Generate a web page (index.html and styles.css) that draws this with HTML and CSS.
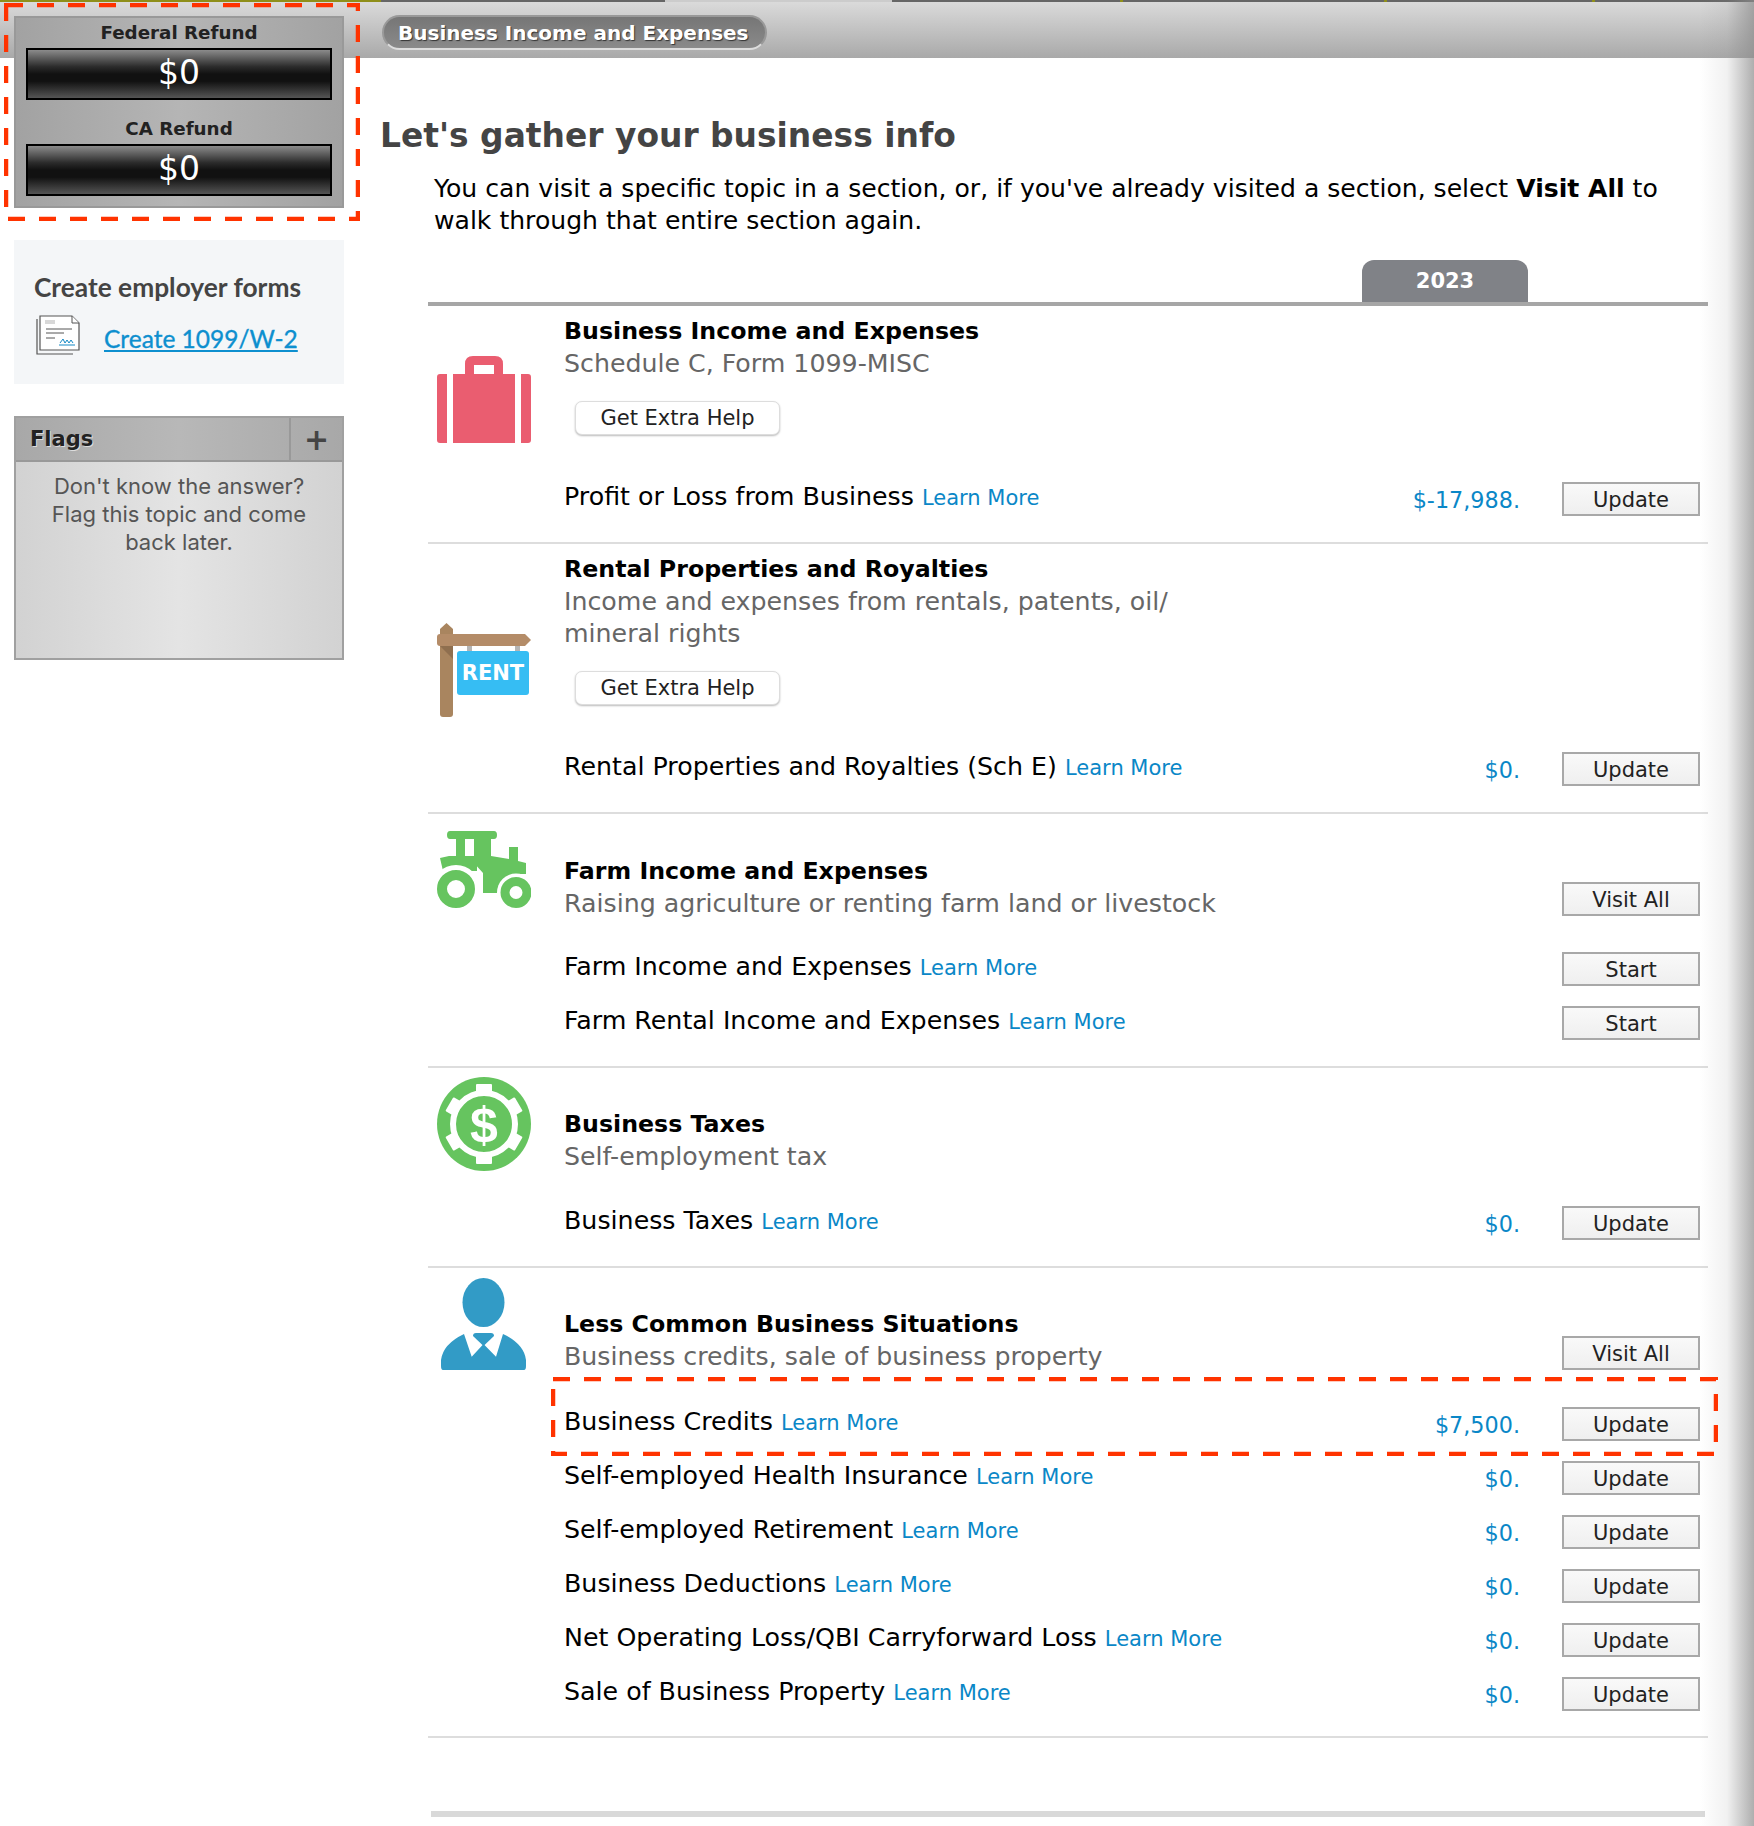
FILE: index.html
```html
<!DOCTYPE html>
<html lang="en">
<head>
<meta charset="utf-8">
<title>Business Income and Expenses</title>
<link rel="stylesheet" href="styles.css">
</head>
<body>
<div class="page">
  <aside class="side">
    <div class="refunds">
      <div class="refund-label">Federal Refund</div>
      <div class="refund-value">$0</div>
      <div class="refund-label second">CA Refund</div>
      <div class="refund-value">$0</div>
    </div>
    <div class="employer">
      <h3 class="employer-title">Create employer forms</h3>
      <div class="employer-link">
        <svg class="doc-icon" viewBox="0 0 44 40" aria-hidden="true">
          <path d="M1 4V39H37" fill="none" stroke="#555" stroke-width="1.200"/>
          <path d="M4 1H36L43 8V35H4Z" fill="#fff" stroke="#555" stroke-width="1.200"/>
          <path d="M36 1V8H43" fill="#fff" stroke="#555" stroke-width="1"/>
          <rect x="9" y="5" width="10" height="4" fill="#d8d8d8"/>
          <path d="M10 14H36M10 18H28M10 23H19" stroke="#555" stroke-width="1"/>
          <path d="M24 28L27 24L29 28L31 25L33 28L35 25L37 28M23 30H39" fill="none" stroke="#1589c5" stroke-width="1"/>
        </svg>
        <a class="link" href="#">Create 1099/W-2</a>
      </div>
    </div>
    <div class="flags">
      <div class="flags-head">
        <span class="flags-title">Flags</span>
        <span class="flags-plus">+</span>
      </div>
      <p class="flags-body">Don't know the answer? Flag this topic and come back later.</p>
    </div>
  </aside>

  <main class="main">
    <div class="crumb-bar"><span class="crumb">Business Income and Expenses</span></div>
    <h1 class="heading">Let's gather your business info</h1>
    <p class="intro">You can visit a specific topic in a section, or, if you've already visited a section, select <b>Visit All</b> to walk through that entire section again.</p>
    <div class="table">
      <div class="tab-line"><span class="tab">2023</span></div>

      <section class="section s1">
        <svg class="icon icon-case" viewBox="0 0 94 87" aria-hidden="true">
          <path fill-rule="evenodd" fill="#ea5d70" d="M36 0H58Q66 0 66 8V18H78V87H16V18H28V8Q28 0 36 0ZM37 9V18H57V9Z"/>
          <path fill="#ea5d70" d="M3 18H10V87H3Q0 87 0 84V21Q0 18 3 18ZM84 18H91Q94 18 94 21V84Q94 87 91 87H84Z"/>
        </svg>
        <div class="content">
          <div class="head"><div>
            <h2 class="title">Business Income and Expenses</h2>
            <p class="sub">Schedule C, Form 1099-MISC</p>
          </div></div>
          <button class="help">Get Extra Help</button>
          <div class="rows gap-help">
            <div class="row"><span class="name">Profit or Loss from Business <a class="more" href="#">Learn More</a></span><span class="value">$-17,988.</span><button class="btn">Update</button></div>
          </div>
        </div>
      </section>

      <section class="section s2">
        <svg class="icon icon-rent" viewBox="0 0 94 94" aria-hidden="true">
          <rect x="30" y="22" width="5" height="7" fill="#b5b5b5"/>
          <rect x="78" y="22" width="5" height="7" fill="#b5b5b5"/>
          <path fill="#a9855f" d="M3 6L9.500 0L16 6V91Q16 94 13 94H6Q3 94 3 91Z"/>
          <path fill="#8f6f4f" d="M3 23H16V36Z"/>
          <path fill="#b48c68" d="M3 11H88L94 17L88 23H3Q0 23 0 20V14Q0 11 3 11Z"/>
          <rect x="20" y="28" width="72" height="44" rx="3" fill="#36bdf3"/>
          <text class="rent-text" x="56" y="57" text-anchor="middle">RENT</text>
        </svg>
        <div class="content">
          <div class="head"><div>
            <h2 class="title">Rental Properties and Royalties</h2>
            <p class="sub narrow">Income and expenses from rentals, patents, oil/ mineral rights</p>
          </div></div>
          <button class="help">Get Extra Help</button>
          <div class="rows gap-help">
            <div class="row"><span class="name">Rental Properties and Royalties (Sch E) <a class="more" href="#">Learn More</a></span><span class="value">$0.</span><button class="btn">Update</button></div>
          </div>
        </div>
      </section>

      <section class="section s3">
        <svg class="icon icon-tractor" viewBox="0 0 94 77" aria-hidden="true">
          <path fill="#66c45f" fill-rule="evenodd" d="M13 0H57Q60 0 60 4T57 8H54V25L72 28V16H81V30L89 32V43H84L60 62H46V42L37 32V8H28V25H19V8H13Q10 8 10 4T13 0Z"/>
          <path fill="#66c45f" d="M3 27L12 25H40V40H6Z"/>
          <circle cx="19" cy="58" r="24" fill="#fff"/>
          <circle cx="79" cy="61.500" r="19" fill="#fff"/>
          <circle cx="19" cy="58" r="14" fill="none" stroke="#66c45f" stroke-width="10"/>
          <circle cx="79" cy="61.500" r="11" fill="none" stroke="#66c45f" stroke-width="9"/>
        </svg>
        <div class="content">
          <div class="head"><div>
            <h2 class="title">Farm Income and Expenses</h2>
            <p class="sub">Raising agriculture or renting farm land or livestock</p>
          </div><button class="btn visit">Visit All</button></div>
          <div class="rows gap-rows">
            <div class="row"><span class="name">Farm Income and Expenses <a class="more" href="#">Learn More</a></span><button class="btn">Start</button></div>
            <div class="row"><span class="name">Farm Rental Income and Expenses <a class="more" href="#">Learn More</a></span><button class="btn">Start</button></div>
          </div>
        </div>
      </section>

      <section class="section s4">
        <svg class="icon icon-money" viewBox="0 0 94 94" aria-hidden="true">
          <circle cx="47" cy="47" r="47" fill="#66c45f"/>
          <circle cx="47" cy="47" r="31" fill="none" stroke="#fff" stroke-width="6"/>
          <g fill="#fff">
            <rect x="39" y="7" width="16" height="11" rx="1"/>
            <rect x="39" y="7" width="16" height="11" rx="1" transform="rotate(60 47 47)"/>
            <rect x="39" y="7" width="16" height="11" rx="1" transform="rotate(120 47 47)"/>
            <rect x="39" y="7" width="16" height="11" rx="1" transform="rotate(180 47 47)"/>
            <rect x="39" y="7" width="16" height="11" rx="1" transform="rotate(240 47 47)"/>
            <rect x="39" y="7" width="16" height="11" rx="1" transform="rotate(300 47 47)"/>
          </g>
          <text class="money-text" x="47" y="65" text-anchor="middle">$</text>
        </svg>
        <div class="content">
          <div class="head"><div>
            <h2 class="title">Business Taxes</h2>
            <p class="sub">Self-employment tax</p>
          </div></div>
          <div class="rows gap-rows">
            <div class="row"><span class="name">Business Taxes <a class="more" href="#">Learn More</a></span><span class="value">$0.</span><button class="btn">Update</button></div>
          </div>
        </div>
      </section>

      <section class="section s5">
        <svg class="icon icon-person" viewBox="0 0 85 92" aria-hidden="true">
          <ellipse cx="42.500" cy="24.500" rx="21" ry="24.500" fill="#329bc6"/>
          <path fill="#329bc6" d="M2 92Q0 92 0 88V82Q2 66 23 56L30.700 78.700L42.500 66L55 78.700L62 56Q83 66 85 82V88Q85 92 83 92Z"/>
          <path fill="#329bc6" d="M35 55H50Q53 55 53 58L42.500 68L32 58Q32 55 35 55Z"/>
        </svg>
        <div class="content">
          <div class="head"><div>
            <h2 class="title">Less Common Business Situations</h2>
            <p class="sub">Business credits, sale of business property</p>
          </div><button class="btn visit">Visit All</button></div>
          <div class="rows gap-rows">
            <div class="row"><span class="name">Business Credits <a class="more" href="#">Learn More</a></span><span class="value">$7,500.</span><button class="btn">Update</button></div>
            <div class="row"><span class="name">Self-employed Health Insurance <a class="more" href="#">Learn More</a></span><span class="value">$0.</span><button class="btn">Update</button></div>
            <div class="row"><span class="name">Self-employed Retirement <a class="more" href="#">Learn More</a></span><span class="value">$0.</span><button class="btn">Update</button></div>
            <div class="row"><span class="name">Business Deductions <a class="more" href="#">Learn More</a></span><span class="value">$0.</span><button class="btn">Update</button></div>
            <div class="row"><span class="name">Net Operating Loss/QBI Carryforward Loss <a class="more" href="#">Learn More</a></span><span class="value">$0.</span><button class="btn">Update</button></div>
            <div class="row"><span class="name">Sale of Business Property <a class="more" href="#">Learn More</a></span><span class="value">$0.</span><button class="btn">Update</button></div>
          </div>
        </div>
      </section>
      <div class="end-bar"></div>
    </div>
  </main>

  <div class="edge-shadow"></div>
  <svg class="mark mark-a" viewBox="0 0 356 218" aria-hidden="true"><rect x="2" y="2" width="352" height="214" fill="none" stroke="#ff3300" stroke-width="4.500" stroke-dasharray="17 14"/></svg>
  <svg class="mark mark-b" viewBox="0 0 1167 79" aria-hidden="true"><rect x="2" y="2" width="1163" height="75" fill="none" stroke="#ff3300" stroke-width="4.500" stroke-dasharray="17 14"/></svg>
</div>
</body>
</html>
```
FILE: styles.css
```css
* { box-sizing: border-box; }
html, body { margin: 0; padding: 0; background: #fff; }
body { font-family: "DejaVu Sans", sans-serif; color: #000; }
p, h1, h2, h3 { margin: 0; }
button { font-family: inherit; cursor: pointer; padding: 0; }

.page {
  position: relative;
  display: flex;
  width: 1754px;
  height: 1826px;
  overflow: hidden;
  background:
    linear-gradient(90deg, #8f8f1a 0 381px, #666 381px 665px, #ccc 665px 892px, #666 892px 1120px, #8f8f1a 1120px 1123px, #666 1123px 1384px, #8f8f1a 1384px 1387px, #666 1387px 1592px, #8f8f1a 1592px 1595px, #666 1595px) 0 0 / 100% 2px no-repeat,
    linear-gradient(#dcdcdc, #a9a9a9) 0 0 / 100% 58px no-repeat,
    #fff;
}

/* sidebar */
.side { flex: 0 0 380px; padding: 16px 0 0 14px; }
.refunds {
  width: 330px; height: 192px;
  padding: 0 10px;
  border: 2px solid #999;
  background: linear-gradient(90deg, #a2a2a2, #b5b5b5 50%, #a2a2a2);
}
.refund-label {
  height: 30px;
  font-size: 18.300px; line-height: 30px; font-weight: 700;
  text-align: center; color: #222;
}
.refund-label.second { margin-top: 14px; }
.refund-value {
  height: 52px;
  border: 2px solid #000;
  background: linear-gradient(#8b8b8b 0, #2b2b2b 35%, #111 50%, #111 65%, #555 100%);
  color: #fff;
  font-size: 33px; line-height: 46px; text-align: center;
}
.employer {
  width: 330px; height: 144px; margin-top: 32px;
  padding: 31px 0 0 20px;
  background: #f4f6f8;
}
.employer-title { font: 700 26.300px/32px "Lato", sans-serif; color: #444; white-space: nowrap; }
.employer-link { display: flex; align-items: center; gap: 24px; margin-top: 12px; margin-left: 2px; }
.doc-icon { width: 44px; height: 40px; flex: none; }
.link { font: 400 24.500px/32px "Lato", sans-serif; color: #0d8fcf; margin-top: 8px; -webkit-text-stroke: .35px #0d8fcf; }

.flags {
  width: 330px; height: 244px; margin-top: 32px;
  border: 2px solid #a0a0a0;
  background: linear-gradient(90deg, #d2d2d2, #e4e4e4 50%, #d2d2d2);
}
.flags-head {
  display: flex; height: 44px;
  border-bottom: 2px solid #999;
  background: linear-gradient(90deg, #a8a8a8, #b8b8b8 50%, #a8a8a8);
}
.flags-title { flex: 1; padding-left: 14px; font-size: 21px; font-weight: 700; line-height: 42px; color: #222; text-shadow: 1px 1px 0 #ddd; }
.flags-plus { width: 53px; border-left: 2px solid #999; text-align: center; font-size: 30px; line-height: 44px; font-weight: 700; color: #444; }
.flags-body {
  padding: 10px 24px 0;
  font: 400 22px/28px "Inter", sans-serif;
  text-align: center; color: #555;
}

/* main */
.main { flex: 1; min-width: 0; }
.crumb-bar { height: 58px; padding-top: 15px; }
.crumb {
  display: inline-block; height: 35px; width: 385px;
  padding-left: 14px; margin-left: 2px;
  border-radius: 18px;
  background: linear-gradient(#767676, #8a8a8a);
  border: 2px solid #999;
  border-bottom-color: #ddd;
  color: #fff; font-size: 20px; font-weight: 700; line-height: 33px;
  text-shadow: 1px 1px 1px #333;
  white-space: nowrap;
}
.heading { margin-top: 55px; font-size: 32.900px; line-height: 46px; font-weight: 700; color: #444; }
.intro { width: 1240px; margin: 14px 0 0 54px; font-size: 25.100px; line-height: 32px; }
.table { width: 1280px; margin: 23px 0 0 48px; }
.tab-line { display: flex; justify-content: flex-end; height: 46px; border-bottom: 4px solid #a6a6a6; padding-right: 180px; }
.tab { width: 166px; height: 42px; border-radius: 12px 12px 0 0; background: #808287; color: #fff; font-size: 21px; font-weight: 700; line-height: 42px; text-align: center; }

.section { display: flex; border-bottom: 2px solid #ddd; }
.icon { flex: none; display: block; width: 94px; margin-left: 9px; }
.content { flex: 1; margin-left: 33px; padding-right: 8px; padding-bottom: 16px; min-width: 0; }
.s1 .content { padding-top: 9px; }
.s2 .content { padding-top: 9px; }
.s3 .content { padding-top: 41px; }
.s4 .content { padding-top: 40px; }
.s5 .content { padding-top: 40px; padding-bottom: 15px; }
.icon-case { height: 87px; margin-top: 50px; }
.icon-rent { height: 94px; margin-top: 79px; }
.icon-tractor { height: 77px; margin-top: 17px; }
.icon-money { height: 94px; margin-top: 9px; }
.icon-person { width: 85px; height: 92px; margin: 10px 5px 0 13px; }
.rent-text { font: 700 21px "DejaVu Sans", sans-serif; fill: #fff; }
.money-text { font: 700 50px "Liberation Sans", sans-serif; fill: #fff; }

.head { display: flex; justify-content: space-between; align-items: flex-end; }
.title { font-size: 23.700px; line-height: 33px; font-weight: 700; }
.sub { font-size: 25.250px; line-height: 32px; color: #666; }
.sub.narrow { width: 640px; }
.help {
  display: block; width: 205px; height: 34px; margin: 21px 0 0 11px;
  border: 1px solid #ddd; border-radius: 7px; background: #fff;
  box-shadow: 0 1px 2px #bbb;
  font-size: 21px; color: #222;
}
.gap-help { margin-top: 37px; }
.gap-rows { margin-top: 24px; }
.s3 .gap-rows { margin-top: 22px; }
.s4 .gap-rows { margin-top: 23px; }
.row { display: flex; align-items: center; height: 54px; }
.name { flex: 1; font-size: 25.300px; padding-bottom: 5px; white-space: nowrap; }
.more { font-size: 21px; color: #0a87c7; text-decoration: none; }
.value { font-size: 22.300px; color: #0a87c7; margin-right: 42px; padding-top: 2px; }
.btn {
  flex: none; width: 138px; height: 34px; padding-top: 2px;
  border: 2px solid #a8a8a8; background: linear-gradient(#f9f9f9, #efefef);
  font-size: 21px; line-height: 28px; color: #222;
}
.s3 .visit { margin-bottom: 4px; }
.s5 .visit { margin-bottom: 3px; }
.end-bar { height: 6px; margin: 73px 3px 0; background: #d9d9d9; }

/* overlays */
.edge-shadow {
  position: absolute; top: 0; right: 0; bottom: 0; width: 54px;
  background: linear-gradient(90deg, rgba(140,140,140,0), rgba(140,140,140,.12) 50%, rgba(140,140,140,.7));
  pointer-events: none;
}
.mark { position: absolute; display: block; }
.mark-a { left: 4px; top: 3px; width: 356px; height: 218px; }
.mark-b { left: 551px; top: 1377px; width: 1167px; height: 79px; }
```
